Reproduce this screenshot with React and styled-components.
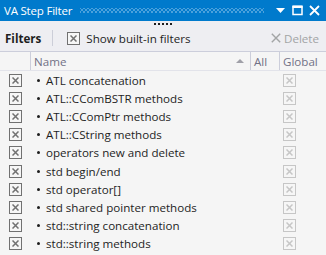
import React from 'react'
import styled, { createGlobalStyle } from 'styled-components'

const GlobalStyle = createGlobalStyle`
  html, body { margin: 0; padding: 0; }
  body {
    background: #eeeef2;
    font-family: "Open Sans", "Noto Sans", sans-serif;
    font-size: 11.6px;
    color: #1e1e1e;
  }
`

const filters = [
  'ATL concatenation',
  'ATL::CComBSTR methods',
  'ATL::CComPtr methods',
  'ATL::CString methods',
  'operators new and delete',
  'std begin/end',
  'std operator[]',
  'std shared pointer methods',
  'std::string concatenation',
  'std::string methods',
]

const Window = styled.div`
  width: 326px;
  height: 255px;
  display: flex;
  flex-direction: column;
  background: #eeeef2;
  overflow: hidden;
`

const TitleBar = styled.div`
  height: 21px;
  flex-shrink: 0;
  background: #007acc;
  display: flex;
  align-items: center;
  padding: 0 4px 0 4px;
  color: #fff;
`

const Title = styled.span`
  font-size: 11.5px;
  letter-spacing: -0.2px;
  white-space: nowrap;
`

const Grip = styled.div`
  flex: 1;
  height: 5px;
  margin: 0 8px 0 8px;
  background-image:
    radial-gradient(circle, #4fa3dd 0.7px, transparent 0.9px),
    radial-gradient(circle, #4fa3dd 0.7px, transparent 0.9px);
  background-size: 4px 4px, 4px 4px;
  background-position: 0 0, 2px 2px;
`

const TitleButton = styled.div`
  width: 16px;
  height: 16px;
  display: flex;
  align-items: center;
  justify-content: center;
  margin-left: ${p => p.gap || 0}px;
`

const DragDots = styled.div`
  height: 6px;
  flex-shrink: 0;
  display: flex;
  justify-content: center;
  gap: 2px;
  padding-top: 2px;
  box-sizing: border-box;
  & > span {
    width: 2px;
    height: 2px;
    background: #1e1e1e;
  }
`

const Toolbar = styled.div`
  height: 22px;
  flex-shrink: 0;
  display: flex;
  align-items: center;
  padding: 0 7px 0 5px;
`

const ToolLabel = styled.span`
  font-weight: 700;
  font-size: 11.6px;
`

const Separator = styled.div`
  width: 1px;
  height: 16px;
  background: #ccced8;
  margin: 0 14px 0 11px;
`

const ToolCheck = styled.label`
  display: flex;
  align-items: center;
  gap: 6px;
  flex: 1;
`

const Box = styled.span`
  width: 11px;
  height: 11px;
  border: 1px solid ${p => (p.faded ? '#c6c6c6' : '#717171')};
  background: #f6f6f6;
  display: flex;
  align-items: center;
  justify-content: center;
  flex-shrink: 0;
`

const DeleteButton = styled.span`
  display: flex;
  align-items: center;
  gap: 3px;
  color: #a2a4a5;
`

const List = styled.div`
  flex: 1;
  margin-top: 2px;
  border-top: 1px solid #cccedb;
  background: #f5f5f5;
`

const Header = styled.div`
  display: grid;
  grid-template-columns: 30px 1fr 29px 47px;
  height: 18px;
  color: #717186;
  border-bottom: 1px solid #e2e3ea;
`

const HeadCell = styled.div`
  display: flex;
  align-items: center;
  padding-left: 3px;
  border-left: ${p => (p.first ? 'none' : '1px solid #cccedb')};
  justify-content: ${p => (p.spread ? 'space-between' : 'flex-start')};
  padding-right: ${p => (p.spread ? 6 : 0)}px;
`

const Row = styled.div`
  display: grid;
  grid-template-columns: 30px 1fr 29px 47px;
  height: 18.2px;
  align-items: center;
`

const CheckCell = styled.div`
  display: flex;
  justify-content: ${p => (p.start ? 'flex-start' : 'center')};
  padding-left: ${p => p.pad || 0}px;
`

const NameCell = styled.div`
  display: flex;
  align-items: center;
  white-space: nowrap;
  padding-left: 7px;
  &::before {
    content: '';
    width: 3px;
    height: 3px;
    border-radius: 50%;
    background: #1e1e1e;
    margin-right: 6px;
  }
`

const Cross = ({ color = '#717171', size = 7 }) => (
  <svg width={size} height={size} viewBox="0 0 7 7">
    <path d="M0.5 0.5L6.5 6.5M6.5 0.5L0.5 6.5" stroke={color} strokeWidth="1.5" />
  </svg>
)

export default function App() {
  return (
    <>
      <GlobalStyle />
      <Window>
        <TitleBar>
          <Title>VA Step Filter</Title>
          <Grip />
          <TitleButton>
            <svg width="9" height="5" viewBox="0 0 9 5">
              <path d="M0 0H9L4.5 5Z" fill="#fff" />
            </svg>
          </TitleButton>
          <TitleButton gap={1}>
            <svg width="11" height="11" viewBox="0 0 11 11">
              <rect x="1" y="1.5" width="9" height="8" fill="none" stroke="#fff" strokeWidth="1.5" />
              <rect x="0.5" y="0.5" width="10" height="2.5" fill="#fff" />
            </svg>
          </TitleButton>
          <TitleButton gap={1}>
            <svg width="11" height="11" viewBox="0 0 11 11">
              <path d="M1 1L10 10M10 1L1 10" stroke="#fff" strokeWidth="1.8" />
            </svg>
          </TitleButton>
        </TitleBar>
        <DragDots>
          <span /><span /><span /><span /><span />
        </DragDots>
        <Toolbar>
          <ToolLabel>Filters</ToolLabel>
          <Separator />
          <ToolCheck>
            <Box>
              <Cross />
            </Box>
            Show built-in filters
          </ToolCheck>
          <DeleteButton>
            <svg width="10" height="10" viewBox="0 0 10 10">
              <path d="M0.8 0.8L9.2 9.2M9.2 0.8L0.8 9.2" stroke="#a2a4a5" strokeWidth="1.4" />
            </svg>
            Delete
          </DeleteButton>
        </Toolbar>
        <List>
          <Header>
            <HeadCell first />
            <HeadCell spread>
              Name
              <svg width="8" height="4" viewBox="0 0 8 4">
                <path d="M0 4H8L4 0Z" fill="#a0a0a8" />
              </svg>
            </HeadCell>
            <HeadCell>All</HeadCell>
            <HeadCell>Global</HeadCell>
          </Header>
          {filters.map(name => (
            <Row key={name}>
              <CheckCell>
                <Box>
                  <Cross />
                </Box>
              </CheckCell>
              <NameCell>{name}</NameCell>
              <div />
              <CheckCell start pad={4}>
                <Box faded>
                  <Cross color="#c6c6c6" />
                </Box>
              </CheckCell>
            </Row>
          ))}
        </List>
      </Window>
    </>
  )
}
